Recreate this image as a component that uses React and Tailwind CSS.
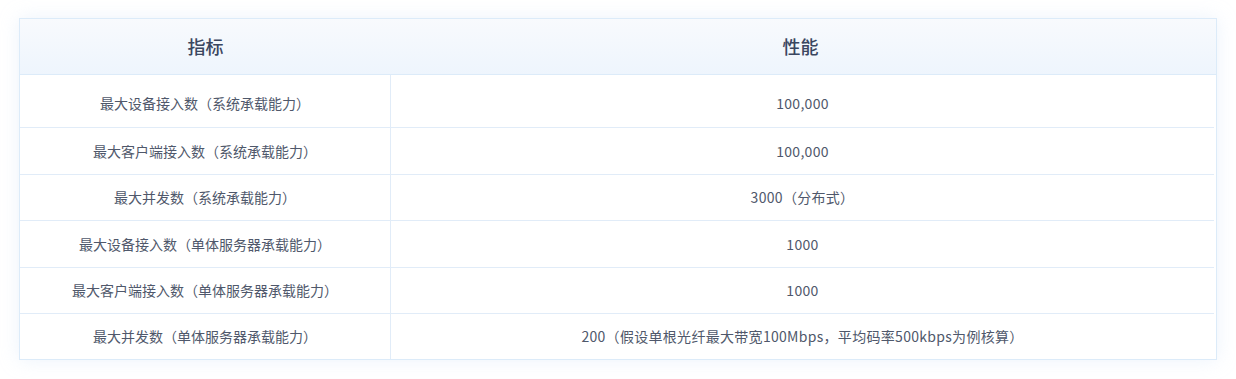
import React from 'react';

// performance spec rows: [metric, value, row height]
const rows = [
    { name: '最大设备接入数（系统承载能力）', value: '100,000', h: 'h-[52px] pt-[4px]' },
    { name: '最大客户端接入数（系统承载能力）', value: '100,000', h: 'h-[46px]' },
    { name: '最大并发数（系统承载能力）', value: '3000（分布式）', h: 'h-[45px]' },
    { name: '最大设备接入数（单体服务器承载能力）', value: '1000', h: 'h-[46px]' },
    { name: '最大客户端接入数（单体服务器承载能力）', value: '1000', h: 'h-[45px]' },
    { name: '最大并发数（单体服务器承载能力）', value: '200（假设单根光纤最大带宽100Mbps，平均码率500kbps为例核算）', h: 'h-[45px]' },
];

const App = () => {
    return (
        <div
            className="w-[1236px] h-[379px] bg-white pt-[18px] px-[19px]"
            style={{ fontFamily: '"Noto Sans CJK SC", "Noto Sans", sans-serif' }}
        >
            <div className="border border-[#dcebf9] bg-white shadow-[0_0_18px_rgba(200,222,245,0.35)]">
                {/* header */}
                <div className="grid grid-cols-[371px_1fr] h-[56px] border-b border-[#dcebf9] bg-gradient-to-b from-[#f8fafd] to-[#eef5fd] text-[18px] font-medium text-[#3a4660]">
                    <div className="flex items-center justify-center">指标</div>
                    <div className="flex items-center justify-center pr-[6px]">性能</div>
                </div>

                {/* body */}
                <div className="mr-[2px]">
                    {rows.map((row, index) => (
                        <div
                            key={index}
                            className={`grid grid-cols-[371px_1fr] text-[14px] text-[#4f586b] ${index < rows.length - 1 ? 'border-b border-[#e1ecf8]' : ''}`}
                        >
                            <div className={`flex items-center justify-center border-r border-[#e1ecf8] ${row.h}`}>{row.name}</div>
                            <div className={`flex items-center justify-center tracking-[0.3px] ${row.h}`}>{row.value}</div>
                        </div>
                    ))}
                </div>
            </div>
        </div>
    );
};

export default App;
